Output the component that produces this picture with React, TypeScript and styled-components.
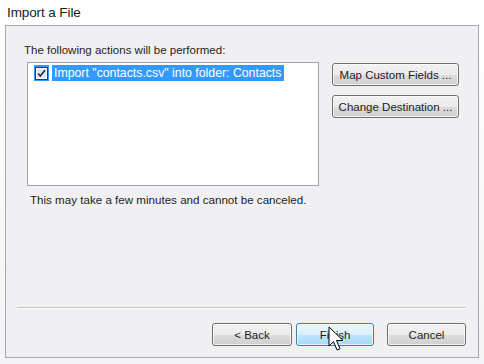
import styled, { createGlobalStyle } from "styled-components";

const GlobalStyle = createGlobalStyle`
  html, body {
    margin: 0;
    padding: 0;
    background: #ffffff;
  }
  body {
    font-family: "Liberation Sans", "DejaVu Sans", sans-serif;
    color: #1e1e1e;
  }
`;

const Window = styled.div`
  position: relative;
  width: 484px;
  height: 364px;
  display: flex;
  flex-direction: column;
  background: linear-gradient(180deg, #ffffff 0%, #f4f4f6 100%);
  overflow: hidden;
`;

const TitleBar = styled.div`
  height: 25px;
  flex: none;
  display: flex;
  align-items: center;
  padding-left: 7px;
  font-size: 13.5px;
  color: #1c1c1c;
  letter-spacing: -0.1px;
`;

const Panel = styled.div`
  flex: none;
  height: 333px;
  margin: 0 5px 0 5px;
  border: 1px solid #a9a9ad;
  background: #f0eff2;
  display: flex;
  flex-direction: column;
  padding: 17px 0 0 0;
  box-sizing: border-box;
`;

const Label = styled.div`
  font-size: 11.5px;
  padding-left: 18px;
  height: 19px;
  line-height: 14px;
`;

const Row = styled.div`
  display: flex;
  align-items: flex-start;
  padding-left: 21px;
`;

const ListBox = styled.div`
  width: 292px;
  height: 124px;
  box-sizing: border-box;
  border: 1px solid #a4a4a8;
  background: #ffffff;
  padding: 2px 0 0 6px;
`;

const ListItem = styled.div`
  display: flex;
  align-items: center;
  height: 16px;
  gap: 3px;
`;

const Selected = styled.span`
  background: #3399ff;
  color: #ffffff;
  font-size: 12.3px;
  line-height: 16px;
  padding: 0 3px 0 2px;
  white-space: nowrap;
`;

const CheckBox = styled.span`
  width: 15px;
  height: 16px;
  background: #3399ff;
  display: flex;
  align-items: center;
  justify-content: center;
`;

const SideButtons = styled.div`
  display: flex;
  flex-direction: column;
  gap: 9px;
  margin-left: 13px;
  margin-top: 1px;
`;

const Button = styled.button<{ $primary?: boolean; $w: number }>`
  width: ${(p) => p.$w}px;
  height: 23px;
  box-sizing: border-box;
  border-radius: 3px;
  border: 1px solid ${(p) => (p.$primary ? "#3c7fb1" : "#707070")};
  background: ${(p) =>
    p.$primary
      ? "linear-gradient(180deg, #eaf6fd 0%, #d9f0fc 50%, #bee6fd 51%, #a7d9f5 100%)"
      : "linear-gradient(180deg, #f2f2f2 0%, #ebebeb 50%, #dddddd 51%, #cfcfcf 100%)"};
  box-shadow: inset 0 0 0 1px rgba(255, 255, 255, 0.7);
  font-family: "Liberation Sans", "DejaVu Sans", sans-serif;
  font-size: 11.5px;
  color: #1e1e1e;
  padding: 0;
  text-align: center;
`;

const Note = styled.div`
  font-size: 11.6px;
  padding-left: 24px;
  margin-top: 7px;
`;

const Spacer = styled.div`
  flex: 1;
`;

const Separator = styled.div`
  height: 0;
  margin: 0 12px 0 11px;
  border-top: 1px solid #c4c4c6;
  border-bottom: 1px solid #ffffff;
`;

const Footer = styled.div`
  display: flex;
  justify-content: flex-end;
  padding: 14px 12px 11px 0;
`;

const Gap = styled.div<{ $w: number }>`
  width: ${(p) => p.$w}px;
`;

const Cursor = styled.svg`
  position: absolute;
  left: 328px;
  top: 326px;
`;

export default function App() {
  return (
    <>
      <GlobalStyle />
      <Window>
        <TitleBar>Import a File</TitleBar>
        <Panel>
          <Label>The following actions will be performed:</Label>
          <Row>
            <ListBox>
              <ListItem>
                <CheckBox>
                  <svg width="13" height="13" viewBox="0 0 13 13">
                    <rect x="0.5" y="0.5" width="12" height="12" fill="#f4f8fc" stroke="#1c3f6e" />
                    <rect x="2" y="2" width="9" height="9" fill="#dde8f4" />
                    <path d="M3 6.5 L5.3 9 L10 3.3" fill="none" stroke="#21345a" strokeWidth="1.8" />
                  </svg>
                </CheckBox>
                <Selected>Import "contacts.csv" into folder: Contacts</Selected>
              </ListItem>
            </ListBox>
            <SideButtons>
              <Button $w={127}>Map Custom Fields ...</Button>
              <Button $w={127}>Change Destination ...</Button>
            </SideButtons>
          </Row>
          <Note>This may take a few minutes and cannot be canceled.</Note>
          <Spacer />
          <Separator />
          <Footer>
            <Button $w={80}>&lt; Back</Button>
            <Gap $w={4} />
            <Button $w={78} $primary>
              Finish
            </Button>
            <Gap $w={13} />
            <Button $w={79}>Cancel</Button>
          </Footer>
        </Panel>
        <Cursor width="17" height="27" viewBox="0 0 17 27">
          <path
            d="M1 1 L1 20 L5.5 15.5 L9 24 L12 22.8 L8.5 14.5 L15 14.5 Z"
            fill="#ffffff"
            stroke="#000000"
            strokeWidth="1"
            strokeLinejoin="round"
          />
        </Cursor>
      </Window>
    </>
  );
}
